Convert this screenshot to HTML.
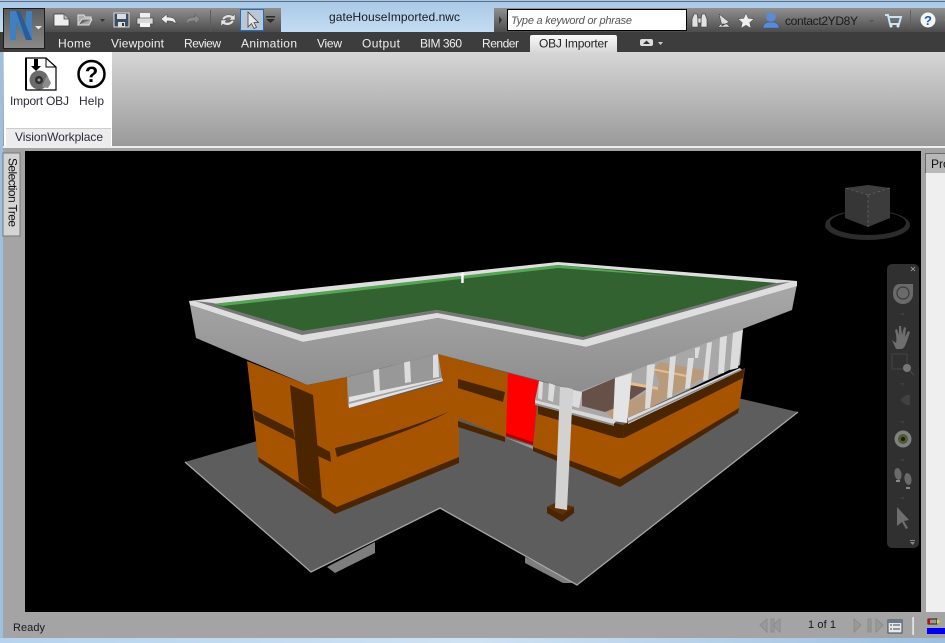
<!DOCTYPE html>
<html><head><meta charset="utf-8"><style>
html,body{margin:0;padding:0;background:#a4a4a4;width:945px;height:643px;overflow:hidden}
svg{display:block}
text{font-family:"Liberation Sans",sans-serif}
</style></head><body>
<svg width="945" height="643" viewBox="0 0 945 643" xmlns="http://www.w3.org/2000/svg">
<defs>
<linearGradient id="sky" x1="0" y1="0" x2="0" y2="1"><stop offset="0" stop-color="#a8c8e6"/><stop offset="1" stop-color="#c3dcf2"/></linearGradient>
<linearGradient id="qat" x1="0" y1="0" x2="0" y2="1"><stop offset="0" stop-color="#909090"/><stop offset="1" stop-color="#4c4c4c"/></linearGradient>
<linearGradient id="rib" x1="0" y1="0" x2="0" y2="1"><stop offset="0" stop-color="#d6d6d6"/><stop offset="1" stop-color="#9a9a9a"/></linearGradient>
<linearGradient id="tab" x1="0" y1="0" x2="0" y2="1"><stop offset="0" stop-color="#fafafa"/><stop offset="1" stop-color="#d8d8d8"/></linearGradient>
<linearGradient id="logo" x1="0" y1="0" x2="0" y2="1"><stop offset="0" stop-color="#5a5a5a"/><stop offset="1" stop-color="#8a8a8a"/></linearGradient>
<linearGradient id="fas" x1="0" y1="0" x2="0" y2="1"><stop offset="0" stop-color="#a8a8a8"/><stop offset="1" stop-color="#8e8e8e"/></linearGradient>
<linearGradient id="btm" x1="0" y1="0" x2="1" y2="0"><stop offset="0" stop-color="#b5d3ee"/><stop offset=".5" stop-color="#cfe2f3"/><stop offset="1" stop-color="#9dbfe0"/></linearGradient>
</defs>

<!-- window frame -->
<rect width="945" height="643" fill="#a4a4a4"/>
<rect width="945" height="32" fill="url(#sky)"/>
<rect y="1" width="945" height="1" fill="#5c6f85"/>
<rect x="0" y="32" width="3" height="611" fill="#9dbfe0"/>
<rect x="494" y="8" width="451" height="24" fill="url(#qat)"/>
<rect x="44" y="8" width="237" height="24" fill="url(#qat)"/>

<!-- tab bar and ribbon -->
<rect x="0" y="32" width="945" height="20" fill="#3d3d3d"/>
<rect x="3" y="52" width="942" height="94" fill="url(#rib)"/>
<rect x="3" y="146" width="942" height="2" fill="#eee"/>
<rect x="4" y="52" width="108" height="94" fill="#fff"/>
<rect x="6" y="128" width="105" height="18" fill="#ececec"/>
<rect x="6" y="128" width="105" height="1" fill="#ccc"/>

<!-- Logo -->
<rect x="3.500" y="8.500" width="41" height="40" fill="url(#logo)" stroke="#1c1c1c"/>
<path d="M10 40V11h6l10 18V11h6v29h-6L16 22v18z" fill="#3f7fc4"/>
<path d="M16 11l10 29h6L20 11z" fill="#2a5d98"/>
<path d="M35 26h7l-3.500 3.500z" fill="#e8e8e8"/>

<!-- QAT icons -->
<path d="M54 14h10l5 5v7H54z" fill="#eee" stroke="#333" stroke-width=".7"/><path d="M64 14v5h5" fill="#bbb" stroke="#444" stroke-width=".7"/>
<path d="M78 25V15h6l1 2h6v2H82l-4 6h11l3-6" fill="#a8a8a8" stroke="#e0e0e0" stroke-width="1"/>
<path d="M100 19h5l-2.500 3z" fill="#333"/>
<rect x="114" y="13" width="15" height="14" fill="#3a4d63" stroke="#ddd" stroke-width="1"/><rect x="117" y="14" width="9" height="5" fill="#ddd"/><rect x="118" y="22" width="7" height="5" fill="#ddd"/><rect x="122" y="23" width="2" height="3" fill="#333"/>
<rect x="140" y="13" width="10" height="5" fill="#eee"/><rect x="137" y="18" width="16" height="6" fill="#d8d8d8" stroke="#333" stroke-width=".5"/><rect x="140" y="23" width="10" height="4" fill="#f4f4f4"/>
<path d="M176 24c0-6-4-7-9-7v-3l-6 5 6 5v-3c4 0 6 0 9 3z" fill="#eee" stroke="#333" stroke-width=".5"/>
<path d="M186 24c0-6 4-7 9-7v-3l5 5-5 5v-3c-4 0-6 0-9 3z" fill="#8a8a8a" stroke="#555" stroke-width=".5"/>
<rect x="210" y="10" width="1" height="21" fill="#5c5c5c"/>
<path d="M222 19a7 6 0 0 1 11-3l2-2v6h-6l2-2a5 4 0 0 0-7 2zM234 21a7 6 0 0 1-11 3l-2 2v-6h6l-2 2a5 4 0 0 0 7-2z" fill="#e4e4e4" stroke="#444" stroke-width=".4"/>
<rect x="240.500" y="9.500" width="23" height="21" fill="#b9c8d6" stroke="#1e6cc4"/>
<path d="M248 12v15l3.500-3.500 2.500 5 2.500-1.200-2.500-4.800h4.500z" fill="#e8e8e8" stroke="#444" stroke-width=".8"/>
<rect x="266" y="16" width="9" height="1.500" fill="#2a2a2a"/><path d="M266 19h9l-4.500 4z" fill="#2a2a2a"/>

<!-- title / search -->
<text x="329" y="21" font-size="12" fill="#1a1a1a" textLength="131">gateHouseImported.nwc</text>
<path d="M499 16l3 4-3 4z" fill="#333"/>
<rect x="507.500" y="9.500" width="179" height="21" fill="#fff" stroke="#000"/>
<text x="511" y="24" font-size="11" font-style="italic" fill="#555" textLength="121">Type a keyword or phrase</text>

<!-- info centre icons -->
<g fill="#e2e2e2" stroke="#333" stroke-width=".6"><path d="M692 27v-8l2-5h3l1 5v8zM701 27v-8l1-5h3l2 5v8z"/><rect x="698" y="18" width="3" height="5"/></g>
<path d="M719 14l10 8-7 4zM718 27h12l-3-3h-6z" fill="#ddd" stroke="#333" stroke-width=".5"/>
<path d="M746 13l2.300 5.300 5.700.5-4.300 3.800 1.300 5.600-5-3-5 3 1.300-5.600-4.300-3.800 5.700-.5z" fill="#eee" stroke="#444" stroke-width=".5"/>
<circle cx="771" cy="17" r="4.800" fill="#5c8bd6"/><path d="M763 28c0-4 3-5 5-6h6c2 1 5 2 5 6z" fill="#5c8bd6" stroke="#2b4d8a" stroke-width=".5"/>
<text x="785" y="25" font-size="12" fill="#1a1a1a" textLength="73">contact2YD8Y</text>
<path d="M869 20h5l-2.500 2.500z" fill="#555"/>
<path d="M885 15h3l2 9h9l2-7h-12" fill="none" stroke="#c8e4f4" stroke-width="2"/><circle cx="891" cy="26" r="1.500" fill="#dceaf4"/><circle cx="898" cy="26" r="1.500" fill="#dceaf4"/>
<rect x="910" y="10" width="1" height="19" fill="#606060"/>
<circle cx="928" cy="20" r="7.500" fill="#f2f6fb"/>
<text x="928" y="25" font-size="13" font-weight="bold" text-anchor="middle" fill="#2559b0">?</text>
<path d="M942 19h3v2z" fill="#777"/>

<!-- tabs -->
<path d="M530 52V37q0-2 2-2h83q2 0 2 2v15z" fill="url(#tab)"/>
<g font-size="12" fill="#f0f0f0">
<text x="58" y="47.500" textLength="33">Home</text>
<text x="111" y="47.500" textLength="53">Viewpoint</text>
<text x="184" y="47.500" textLength="37">Review</text>
<text x="241" y="47.500" textLength="56">Animation</text>
<text x="317" y="47.500" textLength="25">View</text>
<text x="362" y="47.500" textLength="38">Output</text>
<text x="420" y="47.500" textLength="42">BIM 360</text>
<text x="482" y="47.500" textLength="37">Render</text>
</g>
<text x="539" y="47.500" font-size="12" fill="#222" textLength="69">OBJ Importer</text>
<rect x="640" y="39" width="13" height="7" rx="2" fill="#ddd"/><path d="M643 44h7l-3.500-3.500z" fill="#333"/>
<path d="M658 42h5l-2.500 3z" fill="#ccc"/>

<!-- ribbon content -->
<path d="M26 58h20l10 9v23H26z" fill="#fff" stroke="#000" stroke-width="1.200"/>
<path d="M46 58v9h10" fill="none" stroke="#000" stroke-width="1"/>
<rect x="25" y="58" width="2" height="32" fill="#000"/>
<path d="M34 59h4v7h3l-5 5-5-5h3z" fill="#000"/>
<circle cx="39" cy="80" r="9.500" fill="#6b6b6b"/><circle cx="39" cy="80" r="4" fill="#2e2e2e"/><circle cx="39" cy="80" r="1.500" fill="#999"/><path d="M47 75l4 8-3 5-6-1z" fill="#8c8c8c"/>
<circle cx="91.500" cy="74" r="13" fill="#fff" stroke="#000" stroke-width="2.500"/>
<text x="91.500" y="82" font-size="22" font-weight="bold" text-anchor="middle" fill="#000">?</text>
<g font-size="12" fill="#2c2c3c">
<text x="10" y="105" textLength="59">Import OBJ</text>
<text x="79" y="105" textLength="25">Help</text>
<text x="15" y="141" textLength="88">VisionWorkplace</text>
</g>

<!-- side tab -->
<rect x="3" y="148" width="22" height="464" fill="#a4a4a4"/>
<rect x="3" y="153" width="17" height="83" fill="#d4d4d4" stroke="#777" stroke-width="1"/>
<text transform="translate(8.500,158) rotate(90)" font-size="12" fill="#111" textLength="69">Selection Tree</text>

<!-- viewport -->
<rect x="25" y="151" width="896" height="461" fill="#000"/>

<!-- right panel -->
<rect x="921" y="148" width="24" height="464" fill="#a4a4a4"/>
<rect x="925" y="153" width="20" height="20" fill="#b8b8b8"/>
<rect x="925" y="153" width="20" height="1" fill="#6a6a6a"/>
<rect x="925" y="153" width="1" height="20" fill="#6a6a6a"/>
<rect x="926" y="173" width="19" height="439" fill="#efefef"/>
<text x="931" y="168" font-size="12" fill="#111">Pro</text>

<!-- MODEL -->
<path d="M327 567l48-25v11l-40 20z" fill="#7e7e7e"/>
<path d="M525 557v6l38 20h14z" fill="#7e7e7e"/>
<path d="M185 462L257 441 440 340 742 399 798 412 577 585 440 508 311 572z" fill="#5d5d5d"/>
<path d="M185 462L311 572 440 508 577 585 798 412" fill="none" stroke="#a6a6a6" stroke-width="1.300"/>

<!-- walls: block + back wall -->
<path d="M247 361L307 385 347 377 350 408 442 383 438 354 508 373 506 437 459 418 459 457 337 507 258 457z" fill="#a65400"/>
<path d="M258 457L337 507 459 457 459 463 335 514 259 462z" fill="#4a2500"/>
<path d="M458 421L505 437 505 442 458 427z" fill="#4a2500"/>
<path d="M458 379L505 392 503 402 458 388z" fill="#4a2500"/>
<path d="M290 385L313 395 322 498 299 482z" fill="#4a2500"/>
<path d="M253 410L293 430 295 440 255 420z" fill="#4a2500"/>
<path d="M317 445L330 452 331 462 318 456z" fill="#4a2500"/>
<path d="M335 448C380 437 420 424 448 412 425 425 380 440 337 457z" fill="#4a2500"/>

<!-- left window -->
<path d="M347 377L438 354 442 378 348 407z" fill="#989898"/>
<path d="M373 369l6-1 1 24-5 1zM404 362l6-1 1 21-6 1zM433 355l5-1 1 23-6 1z" fill="#dcdcdc"/>
<path d="M349 397L442 378 443 381 349 408z" fill="#e2e2e2"/>
<path d="M349 402L443 379 443 380 349 404z" fill="#a0a0a0"/>

<!-- door -->
<path d="M508 373L539 381 533 445 506 435z" fill="#fe0000"/>
<path d="M506 433L533 442 533 445 506 436z" fill="#b00000"/>
<path d="M504 437L533 446 533 449z" fill="#999"/>

<!-- porch front wall -->
<path d="M538 403L623 425 745 368 739 408 620 479 533 447z" fill="#a65400"/>
<path d="M533 447L620 479 739 408 738 413 620 487 533 451z" fill="#4a2500"/>
<path d="M538 403L623 425 624 438 618 438 538 414z" fill="#4a2500"/>
<path d="M623 425L745 368 743 378 624 438z" fill="#4a2500"/>

<!-- porch interior -->
<path d="M539 381L580 391 743 328 740 365 628 418 617 420 535 400z" fill="#a8a8a8"/>
<path d="M582 392L615 378 615 410 605 412 582 406z" fill="#675048"/>
<path d="M630 382L648 388 630 400z" fill="#675048"/>
<path d="M605 412L615 408 615 420z" fill="#b99a7a"/>
<path d="M628 418L628 402 660 385 654 368 660 362 712 372 690 385 650 408z" fill="#b99a7a"/>
<path d="M630 382L658 387 658 390 630 385zM647 367L687 375 686 377 647 369z" fill="#e7bd8a"/>

<!-- porch mullions -->
<g fill="#dcdcdc">
<path d="M539 381l4 1-1 18-4-2zM549 383l6 2-2 17-5-2zM573 390l9 2-3 16-7-2z"/>
<path d="M615 378l17-5-5 50-14-2z" fill="#e4e4e4"/>
<path d="M647 365l8-1-5 44-5 1zM670 357l6-1-4 41-5 1zM688 358l6 0-4 30-5 1zM695 348l5-1-2 11-3 0zM707 343l5-1-4 38-5 1zM720 337l7-1-3 37-6 1zM733 333l10-3-5 38-8 2z"/>
</g>
<path d="M535 400L617 420 613 425 535 404z" fill="#d8d8d8"/>
<path d="M535 403L614 424 614 426 535 405z" fill="#8e8e8e"/>
<path d="M628 418L740 368 742 370 628 424z" fill="#dcdcdc"/>
<path d="M628 421L741 369 742 370 628 423z" fill="#8e8e8e"/>

<!-- column -->
<path d="M547 507L557 502 574 507 574 513 562 522 547 513z" fill="#4a2500"/>
<path d="M547 507L557 502 574 507 562 515z" fill="#5b3105"/>
<path d="M560 387L573 388 567 510 555 508z" fill="#d2d2d2"/>

<!-- fascia -->
<path d="M190 305L196 338 307 385 347 377 438 354 580 391 792 310 797 284 586 347 438 318 303 342z" fill="url(#fas)"/>
<!-- roof -->
<path d="M189 301L558 262 797 281 797 286 586 347 438 318 303 342 190 305z" fill="#dedede"/>
<path d="M195 301L213 303 303 331 437 310 500 321 583 336 777 283 790 282 583 340 500 325 437 313 302 335z" fill="#777"/>
<path d="M213 304L500 272 558 265 777 283 583 337 500 321 437 310 303 331z" fill="#316230"/>
<path d="M213 304L558 265 680 277 558 268 223 306z" fill="#56a455"/>
<path d="M460 275l2.500-3 2.500 3-1.300 0 0 8-2.500 0 0-8z" fill="#fff"/>

<!-- ViewCube -->
<path fill-rule="evenodd" d="M825 225a42.500 15 0 1 0 85 0a42.500 15 0 1 0-85 0zM830 223a38 12 0 1 0 76 0a38 12 0 1 0-76 0z" fill="#2c2c2c"/>
<path d="M845 188l23-3 22 3-22 7z" fill="#3e3e3e"/>
<path d="M845 188l23 7v32l-23-9z" fill="#363636"/>
<path d="M890 188l-22 7v32l22-9z" fill="#3c3c3c"/>
<path d="M868 195v32M868 195l-23-7M868 195l22-7" stroke="#5e5e5e" stroke-width=".8" stroke-dasharray="3 2" fill="none"/>

<!-- nav bar -->
<rect x="887" y="264" width="32" height="284" rx="5" fill="#303030"/>
<path d="M911 267l4 4M915 267l-4 4" stroke="#aaa" stroke-width=".8"/>
<path d="M900 284h13v10a10 10 0 0 1-20 0q0-10 7-10z" fill="#6a6a6a"/>
<circle cx="903" cy="293" r="6" fill="none" stroke="#3a3a3a" stroke-width="1.200"/>
<path d="M892 340l4 3c1-4 0-9-1-13l2-1 2 6 0-9 2 0 1 9 2-8 2 1-1 9 3-6 2 1-3 9c-2 5-3 8-6 8h-5z" fill="#6e6e6e"/>
<rect x="892" y="354" width="15" height="15" fill="none" stroke="#444"/>
<circle cx="907" cy="368" r="4" fill="#777"/><path d="M910 371l4 4" stroke="#4a4a4a"/>
<path d="M900 400l6-5v10zM906 395h4v10h-4z" fill="#404040"/>
<circle cx="903" cy="439" r="8.500" fill="#808080"/><circle cx="903" cy="439" r="5" fill="#4f5a2e"/><circle cx="903" cy="439" r="2" fill="#1a1a1a"/>
<ellipse cx="898" cy="474" rx="3.500" ry="6" fill="#6a6a6a" transform="rotate(-10 898 474)"/><rect x="896" y="480" width="4" height="2" fill="#888"/>
<ellipse cx="908" cy="479" rx="3.500" ry="6" fill="#6a6a6a" transform="rotate(-10 908 479)"/><rect x="906" y="487" width="4" height="2" fill="#888"/>
<path d="M897 507l12 13-5 1 4 7-2 1-4-7-5 4z" fill="#6e6e6e"/>
<rect x="910" y="540" width="5" height="1" fill="#888"/><path d="M910 542h5l-2.500 3z" fill="#888"/>
<g fill="#3e3e3e"><path d="M900 313h5l-2.500 3zM900 383h5l-2.500 3zM900 421h5l-2.500 3zM900 459h5l-2.500 3zM900 497h5l-2.500 3z"/></g>

<!-- status bar -->
<rect x="3" y="612" width="942" height="26" fill="#a4a4a4"/>
<text x="13" y="631" font-size="11" fill="#1a1a1a" textLength="32">Ready</text>
<g fill="#9a9a9a" stroke="#8c8c8c"><path d="M767 619l-7 6 7 7zM771 619h3v13h-3zM780 619l-7 6 7 7z"/><path d="M854 619l7 6-7 7zM868 619h3v13h-3zM876 619l7 6-7 7z"/></g>
<text x="808" y="628" font-size="11" fill="#14142a" textLength="28">1 of 1</text>
<rect x="888" y="620" width="14" height="13" fill="#e8e8e8" stroke="#3c4a5c"/><rect x="888" y="620" width="14" height="3" fill="#6c7a8c"/><path d="M890 625h2M893 625h7M890 629h2M893 629h7" stroke="#3c4a5c"/>
<rect x="912.500" y="617" width="1.200" height="18" fill="#fff"/>
<rect x="928" y="619" width="9" height="5" fill="#999" stroke="#000" stroke-width=".8"/><rect x="928" y="619" width="2" height="5" fill="#e00000"/><path d="M937 619l3 2.500-3 2.500z" fill="#e8e000"/>
<rect x="927" y="628" width="18" height="6" fill="#0000f0"/>
<rect x="0" y="638" width="945" height="5" fill="url(#btm)"/>
</svg>
</body></html>
